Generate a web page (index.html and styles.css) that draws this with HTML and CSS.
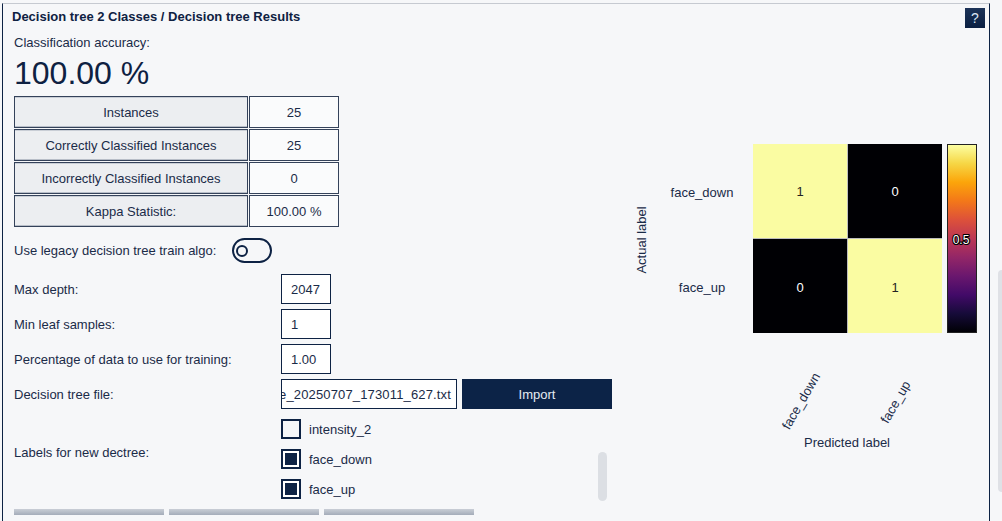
FILE: index.html
```html
<!DOCTYPE html>
<html>
<head>
<meta charset="utf-8">
<title>Decision tree Results</title>
<link rel="stylesheet" href="styles.css">
</head>
<body>
<div class="panel">
  <div class="header">
    <div class="title">Decision tree 2 Classes / Decision tree Results</div>
    <div class="help">?</div>
  </div>
  <div class="content">
    <div class="left">
      <div class="acc-label">Classification accuracy:</div>
      <div class="acc-value">100.00 %</div>
      <div class="stats">
        <div class="cell key">Instances</div><div class="cell val">25</div>
        <div class="cell key">Correctly Classified Instances</div><div class="cell val">25</div>
        <div class="cell key">Incorrectly Classified Instances</div><div class="cell val">0</div>
        <div class="cell key">Kappa Statistic:</div><div class="cell val">100.00 %</div>
      </div>
      <div class="toggle-row">
        <span class="lbl">Use legacy decision tree train algo:</span>
        <span class="toggle"><span class="knob"></span></span>
      </div>
      <div class="fields">
        <div class="field"><span class="flabel">Max depth:</span><span class="input">2047</span></div>
        <div class="field"><span class="flabel">Min leaf samples:</span><span class="input">1</span></div>
        <div class="field"><span class="flabel">Percentage of data to use for training:</span><span class="input">1.00</span></div>
        <div class="field"><span class="flabel">Decision tree file:</span><span class="input file"><span class="fname">dectree_20250707_173011_627.txt</span></span><span class="btn">Import</span></div>
      </div>
      <div class="labels-row">
        <span class="llabel">Labels for new dectree:</span>
        <div class="checklist">
          <div class="check"><span class="box"></span><span>intensity_2</span></div>
          <div class="check"><span class="box on"></span><span>face_down</span></div>
          <div class="check"><span class="box on"></span><span>face_up</span></div>
        </div>
        <div class="thumb"></div>
      </div>
      <div class="bottom-bars"><span></span><span></span><span></span></div>
    </div>
    <svg class="chart" width="368" height="330" viewBox="0 0 368 330">
      <defs>
        <linearGradient id="inferno" x1="0" y1="0" x2="0" y2="1">
          <stop offset="0" stop-color="#fcffa4"/>
          <stop offset="0.1" stop-color="#f6d746"/>
          <stop offset="0.2" stop-color="#fca50a"/>
          <stop offset="0.3" stop-color="#f37819"/>
          <stop offset="0.4" stop-color="#dd513a"/>
          <stop offset="0.5" stop-color="#bc3754"/>
          <stop offset="0.6" stop-color="#932667"/>
          <stop offset="0.7" stop-color="#6a176e"/>
          <stop offset="0.8" stop-color="#420a68"/>
          <stop offset="0.9" stop-color="#160b39"/>
          <stop offset="1" stop-color="#000004"/>
        </linearGradient>
      </defs>
      <rect x="133" y="14" width="189" height="189" fill="#bdbdbd"/>
      <rect x="133" y="14" width="94" height="94" fill="#fafca2"/>
      <rect x="228" y="14" width="94" height="94" fill="#000004"/>
      <rect x="133" y="109" width="94" height="94" fill="#000004"/>
      <rect x="228" y="109" width="94" height="94" fill="#fafca2"/>
      <g class="cellval">
        <text x="180" y="61" fill="#222">1</text>
        <text x="275" y="61" fill="#ffffff">0</text>
        <text x="180" y="157" fill="#ffffff">0</text>
        <text x="275" y="157" fill="#222">1</text>
      </g>
      <rect x="327.5" y="14.5" width="29" height="188" fill="url(#inferno)" stroke="#222" stroke-width="1"/>
      <text class="cbar" x="341" y="110">0.5</text>
      <g class="axis">
        <text x="82" y="62">face_down</text>
        <text x="82" y="157">face_up</text>
        <text x="21" y="110" transform="rotate(-90 21 110)">Actual label</text>
        <text x="181" y="271" transform="rotate(-60 181 271)">face_down</text>
        <text x="275.5" y="272" transform="rotate(-60 275.5 272)">face_up</text>
        <text x="227" y="312">Predicted label</text>
      </g>
    </svg>
  </div>
</div>
<div class="scroll"></div>
</body>
</html>
```
FILE: styles.css
```css
html, body {
  margin: 0;
  padding: 0;
}
body {
  width: 1002px;
  height: 521px;
  overflow: hidden;
  background: #f6f7f9;
  display: flex;
  align-items: flex-start;
  padding: 3px 0 0 2px;
  box-sizing: border-box;
  font-family: "Liberation Sans", Arial, sans-serif;
  font-size: 13px;
  color: #1a2b48;
}
.panel {
  width: 988px;
  height: 530px;
  box-sizing: border-box;
  border-top: 1px solid #c6cad1;
  border-left: 1px solid #0d2244;
  border-right: 1px solid #0d2244;
  background: #f6f7f9;
  flex: none;
}
.header {
  display: flex;
  justify-content: space-between;
  align-items: flex-start;
  padding: 4px 4px 0 9px;
  height: 24px;
  box-sizing: border-box;
}
.title {
  font-weight: bold;
  font-size: 13px;
  line-height: 18px;
  color: #0e2142;
}
.help {
  width: 20px;
  height: 20px;
  background: linear-gradient(#1c3358, #0a1f42);
  color: #dce7f5;
  font-size: 14px;
  line-height: 20px;
  text-align: center;
}
.content {
  display: flex;
  align-items: flex-start;
  padding-left: 11px;
}
.left {
  width: 606px;
  flex: none;
  display: flex;
  flex-direction: column;
}
.acc-label {
  margin-top: 7px;
  line-height: 16px;
}
.acc-value {
  margin-top: 4px;
  font-size: 32px;
  line-height: 36px;
  color: #0e2142;
}
.stats {
  margin-top: 5px;
  display: grid;
  grid-template-columns: 234px 90px;
  grid-auto-rows: 32px;
  gap: 1px;
}
.cell {
  border: 1px solid #34425a;
  display: flex;
  align-items: center;
  justify-content: center;
  box-sizing: border-box;
}
.key {
  background: #eceef1;
  box-shadow: inset 0 1px 0 #c9ced6, inset 0 -1px 0 #b8bec8;
}
.val {
  background: #fafbfc;
}
.toggle-row {
  margin-top: 11px;
  height: 25px;
  display: flex;
  align-items: center;
  gap: 16px;
}
.toggle {
  width: 40px;
  height: 25px;
  box-sizing: border-box;
  border: 2px solid #0d2244;
  border-radius: 13px;
  display: flex;
  align-items: center;
}
.knob {
  width: 12px;
  height: 12px;
  box-sizing: border-box;
  border: 2px solid #0d2244;
  border-radius: 50%;
  margin-left: 2px;
}
.fields {
  margin-top: 11px;
  display: flex;
  flex-direction: column;
  gap: 5px;
}
.field {
  height: 30px;
  display: flex;
  align-items: center;
}
.flabel {
  width: 267px;
  flex: none;
}
.input {
  width: 50px;
  height: 30px;
  box-sizing: border-box;
  border: 1px solid #0d2244;
  background: #ffffff;
  padding-left: 9px;
  display: flex;
  align-items: center;
  color: #1a2b48;
}
.input.file {
  width: 176px;
  padding: 0 5px 0 0;
  justify-content: flex-end;
  overflow: hidden;
  white-space: nowrap;
}
.fname {
  flex: none;
  letter-spacing: 0.15px;
}
.btn {
  margin-left: 5px;
  width: 150px;
  height: 30px;
  background: #0c2347;
  color: #e6ebf2;
  display: flex;
  align-items: center;
  justify-content: center;
}
.labels-row {
  margin-top: 10px;
  height: 80px;
  display: flex;
  align-items: flex-start;
}
.llabel {
  width: 267px;
  flex: none;
  margin-top: 26px;
  line-height: 16px;
}
.checklist {
  flex: 1;
  display: flex;
  flex-direction: column;
  gap: 10px;
}
.check {
  height: 20px;
  display: flex;
  align-items: center;
  gap: 8px;
}
.box {
  width: 20px;
  height: 20px;
  box-sizing: border-box;
  border: 2px solid #0d2244;
  padding: 2px;
  flex: none;
}
.box.on {
  background: #0d2244;
  background-clip: content-box;
  box-shadow: inset 0 0 0 2px #ffffff;
}
.thumb {
  width: 9px;
  height: 49px;
  margin-top: 33px;
  margin-right: 13px;
  border-radius: 5px;
  background: #dcdfe4;
  flex: none;
}
.bottom-bars {
  margin-top: 10px;
  display: flex;
  gap: 5px;
}
.bottom-bars span {
  width: 150px;
  height: 6px;
  background: linear-gradient(#c9ced6, #a4acb9);
}
.chart {
  flex: none;
  margin-top: 102px;
  display: block;
}
.chart text {
  font-family: "Liberation Sans", Arial, sans-serif;
  text-anchor: middle;
  dominant-baseline: central;
}
.cellval text {
  font-size: 13px;
}
.axis text {
  font-size: 13px;
  fill: #1a2b48;
}
.cbar {
  font-size: 12px;
  fill: #ffffff;
  stroke: #000000;
  stroke-width: 2.2px;
  paint-order: stroke;
  stroke-linejoin: round;
}
.scroll {
  flex: none;
  margin-left: 8px;
  margin-top: 267px;
  width: 8px;
  height: 222px;
  border-radius: 4px;
  background: #dfe1e6;
}
```
